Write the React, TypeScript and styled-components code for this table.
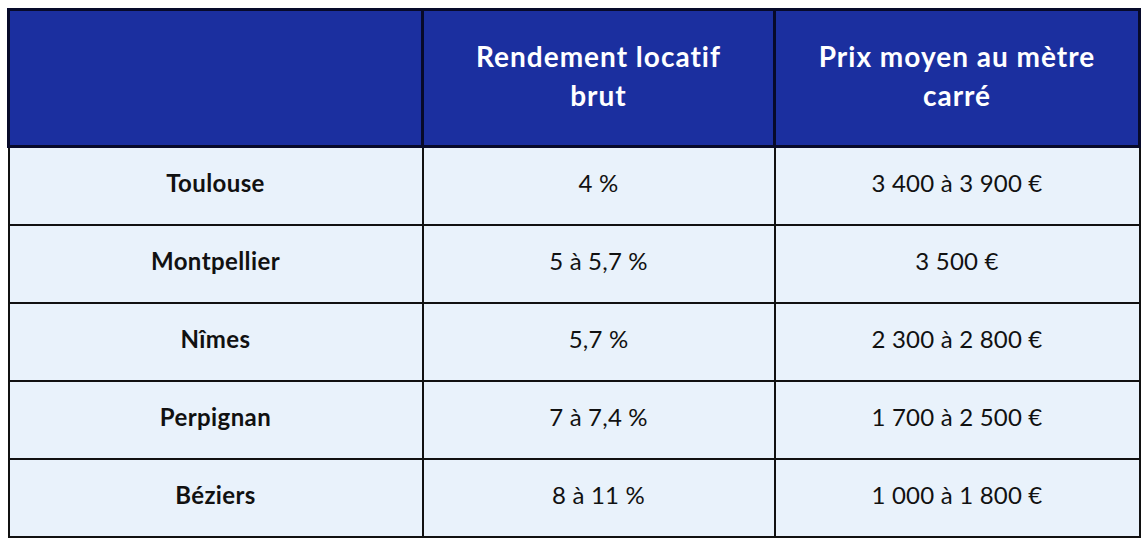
import React from "react";
import styled, { createGlobalStyle } from "styled-components";

type Row = {
  ville: string;
  rendement: string;
  prix: string;
};

const rows: Row[] = [
  { ville: "Toulouse", rendement: "4 %", prix: "3 400 à 3 900 €" },
  { ville: "Montpellier", rendement: "5 à 5,7 %", prix: "3 500 €" },
  { ville: "Nîmes", rendement: "5,7 %", prix: "2 300 à 2 800 €" },
  { ville: "Perpignan", rendement: "7 à 7,4 %", prix: "1 700 à 2 500 €" },
  { ville: "Béziers", rendement: "8 à 11 %", prix: "1 000 à 1 800 €" },
];

const GlobalStyle = createGlobalStyle`
  html, body {
    margin: 0;
    padding: 0;
    background: #ffffff;
  }
  body {
    font-family: Lato, "Noto Sans", sans-serif;
  }
`;

const Page = styled.div`
  padding: 8px 0 0 7px;
`;

const Table = styled.table`
  width: 1131px;
  border-collapse: collapse;
  table-layout: fixed;
  border: 2px solid #111;
`;

const HeadCell = styled.th`
  height: 130px;
  padding: 0 12px 4px;
  background: #1b2f9f;
  color: #fff;
  font-size: 28px;
  font-weight: 700;
  letter-spacing: 1px;
  line-height: 39px;
  text-align: center;
  border: 3px solid #070a2a;
`;

const Cell = styled.td<{ $bold?: boolean }>`
  height: 70px;
  padding: 0 12px 6px;
  background: #e9f2fb;
  color: #111;
  font-size: 24px;
  line-height: 28px;
  font-weight: ${(p) => (p.$bold ? 700 : 400)};
  letter-spacing: ${(p) => (p.$bold ? "0.4px" : "0.2px")};
  text-align: center;
  border: 2px solid #111;
`;

const App = () => {
  return (
    <Page>
      <GlobalStyle />
      <Table>
        <colgroup>
          <col style={{ width: 414 }} />
          <col style={{ width: 352 }} />
          <col style={{ width: 365 }} />
        </colgroup>
        <thead>
          <tr>
            <HeadCell />
            <HeadCell>
              Rendement locatif
              <br />
              brut
            </HeadCell>
            <HeadCell>
              Prix moyen au mètre
              <br />
              carré
            </HeadCell>
          </tr>
        </thead>
        <tbody>
          {rows.map((r) => (
            <tr key={r.ville}>
              <Cell $bold>{r.ville}</Cell>
              <Cell>{r.rendement}</Cell>
              <Cell>{r.prix}</Cell>
            </tr>
          ))}
        </tbody>
      </Table>
    </Page>
  );
};

export default App;
